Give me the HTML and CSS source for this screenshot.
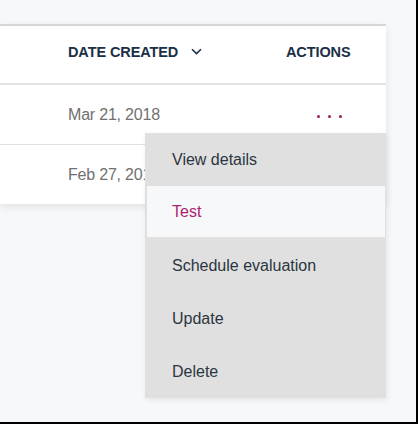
FILE: index.html
```html
<!DOCTYPE html>
<html>
<head>
<meta charset="utf-8">
<link rel="stylesheet" href="styles.css">
</head>
<body>
<div class="frame">
  <div class="card">
    <div class="row head">
      <div class="cell"></div>
      <div class="cell th">DATE CREATED
        <svg class="chev" width="11" height="7" viewBox="0 0 11 7"><path d="M1 1.2 L5.5 5.6 L10 1.2" fill="none" stroke="#1d3249" stroke-width="1.6"/></svg>
      </div>
      <div class="cell th">ACTIONS</div>
    </div>
    <div class="row">
      <div class="cell"></div>
      <div class="cell date">Mar 21, 2018</div>
      <div class="cell act"><span class="dots"><i></i><i></i><i></i></span></div>
    </div>
    <div class="row last">
      <div class="cell"></div>
      <div class="cell date">Feb 27, 2018</div>
      <div class="cell act"></div>
    </div>
  </div>
  <ul class="menu">
    <li>View details</li>
    <li class="active">Test</li>
    <li>Schedule evaluation</li>
    <li>Update</li>
    <li>Delete</li>
  </ul>
</div>
</body>
</html>
```
FILE: styles.css
```css
* { box-sizing: border-box; }
html, body { margin: 0; padding: 0; }
body {
  background: #f7f8fa;
  font-family: "Liberation Sans", Arial, sans-serif;
}
.frame {
  position: relative;
  width: 418px;
  height: 424px;
  padding-top: 24px;
  border-right: 2px solid #000;
  border-bottom: 2px solid #000;
  overflow: hidden;
}
.card {
  width: 386px;
  background: #fff;
  border-top: 2px solid #d6d6d6;
  box-shadow: 0 3px 8px rgba(0, 0, 0, 0.09);
}
.row {
  display: grid;
  grid-template-columns: 68px 1fr 100px;
  height: 60px;
  border-bottom: 1px solid #e2e2e2;
  align-items: center;
}
.row.head { height: 59px; border-bottom: 2px solid #e2e2e2; }
.row.last { border-bottom: none; height: 59px; }
.cell { display: flex; align-items: center; }
.th {
  font-size: 14.5px;
  font-weight: bold;
  color: #1b2f45;
  letter-spacing: -0.1px;
  padding-bottom: 6px;
}
.chev { margin-left: 13px; }
.date {
  font-size: 16px;
  color: #717171;
  letter-spacing: -0.2px;
}
.act { justify-content: flex-end; padding-right: 44px; }
.dots { display: flex; gap: 8px; padding-top: 3px; }
.dots i {
  display: block;
  width: 3px;
  height: 3px;
  border-radius: 50%;
  background: #a01c5e;
}
.menu {
  position: absolute;
  left: 145px;
  top: 133px;
  width: 241px;
  margin: 0;
  padding: 0;
  list-style: none;
  background: #e0e0e0;
  box-shadow: 1px 2px 6px rgba(0, 0, 0, 0.08);
}
.menu li {
  height: 53px;
  display: flex;
  align-items: center;
  padding-left: 27px;
  font-size: 16px;
  color: #2b3640;
}
.menu li.active {
  background: #f7f8fa;
  color: #ad2473;
  margin: 0 1px 0 2px;
  padding-left: 25px;
  height: 51px;
  margin-bottom: 2px;
}
```
